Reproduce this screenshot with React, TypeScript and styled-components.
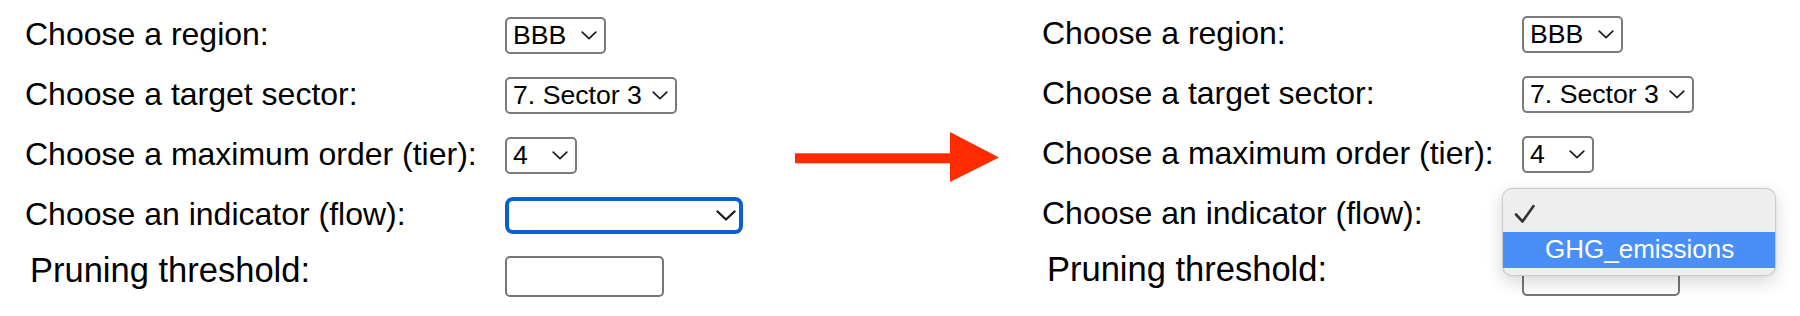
import React from "react";
import styled, { createGlobalStyle } from "styled-components";

const GlobalStyle = createGlobalStyle`
  html, body {
    margin: 0;
    padding: 0;
    background: #ffffff;
  }
  body {
    font-family: "Liberation Sans", Arial, Helvetica, sans-serif;
    color: #000000;
  }
`;

const Page = styled.div`
  display: flex;
  align-items: flex-start;
  width: 1800px;
  height: 316px;
  padding-left: 25px;
  box-sizing: border-box;
  overflow: hidden;
`;

const Panel = styled.div<{ $top: number; $gapLeft: number }>`
  display: grid;
  grid-template-columns: 480px 238px;
  grid-auto-rows: auto;
  row-gap: 23px;
  padding-top: ${(p) => p.$top}px;
  margin-left: ${(p) => p.$gapLeft}px;
`;

const Label = styled.div`
  font-size: 32px;
  line-height: 34px;
  white-space: nowrap;
`;

const PruneLabel = styled.div`
  font-size: 34.5px;
  line-height: 26px;
  padding-left: 5px;
  white-space: nowrap;
`;

const Cell = styled.div`
  position: relative;
  display: flex;
  align-items: flex-start;
`;

const SelectBox = styled.div<{ $w: number; $focused?: boolean }>`
  box-sizing: border-box;
  display: flex;
  align-items: center;
  justify-content: space-between;
  width: ${(p) => p.$w}px;
  height: 37px;
  padding: 0 ${(p) => (p.$focused ? 3 : 7)}px 0 6px;
  border: ${(p) => (p.$focused ? "4px solid #0b5fd0" : "2px solid #7a7a7a")};
  border-radius: ${(p) => (p.$focused ? 8 : 5)}px;
  background: #ffffff;
  font-size: 26.67px;
  white-space: nowrap;
`;

const Chevron = styled.svg`
  flex: none;
  display: block;
`;

const PruneInput = styled.input<{ $w: number }>`
  box-sizing: border-box;
  width: ${(p) => p.$w}px;
  height: 41px;
  margin: -1px 0 0;
  border: 2px solid #767676;
  border-radius: 5px;
  background: #ffffff;
  font-size: 26px;
  padding: 0 6px;
  outline: none;
`;

const ArrowWrap = styled.svg`
  flex: none;
  display: block;
  margin-left: 52px;
  margin-top: 132px;
`;

const Menu = styled.div`
  position: absolute;
  left: -20px;
  top: -8.5px;
  width: 274px;
  box-sizing: border-box;
  padding: 7px 0 7px;
  background: #eeeeee;
  border: 1px solid rgba(0, 0, 0, 0.14);
  border-radius: 10px;
  box-shadow: 0 6px 18px rgba(0, 0, 0, 0.16), 0 0 2px rgba(0, 0, 0, 0.08);
  z-index: 10;
`;

const MenuItem = styled.div<{ $active?: boolean }>`
  display: flex;
  align-items: center;
  height: 36px;
  padding-left: 11px;
  font-size: 26px;
  color: ${(p) => (p.$active ? "#ffffff" : "#1a1a1a")};
  background: ${(p) => (p.$active ? "#4a8ff7" : "transparent")};
  white-space: nowrap;
`;

const Mark = styled.span`
  flex: none;
  display: flex;
  align-items: center;
  width: 31px;
  height: 36px;
`;

function ChevronIcon({ big }: { big?: boolean }) {
  return big ? (
    <Chevron width="20" height="11" viewBox="0 0 20 11">
      <polyline points="1.5,1.5 10,9.5 18.5,1.5" fill="none" stroke="#1c1c1c" strokeWidth="2.4" strokeLinecap="round" strokeLinejoin="round" />
    </Chevron>
  ) : (
    <Chevron width="16" height="9" viewBox="0 0 16 9">
      <polyline points="1.2,1.2 8,7.6 14.8,1.2" fill="none" stroke="#1c1c1c" strokeWidth="1.7" strokeLinecap="round" strokeLinejoin="round" />
    </Chevron>
  );
}

function Select({ value, width, focused }: { value: string; width: number; focused?: boolean }) {
  return (
    <SelectBox $w={width} $focused={focused}>
      <span>{value}</span>
      <ChevronIcon big={focused} />
    </SelectBox>
  );
}

function CheckIcon() {
  return (
    <svg width="21" height="20" viewBox="0 0 21 20" style={{ display: "block" }}>
      <polyline points="2,10.5 8.5,17.5 19.5,2" fill="none" stroke="#333333" strokeWidth="2.6" strokeLinecap="round" strokeLinejoin="round" />
    </svg>
  );
}

function Form({ open, top, gapLeft, pruneWidth }: { open?: boolean; top: number; gapLeft: number; pruneWidth: number }) {
  return (
    <Panel $top={top} $gapLeft={gapLeft}>
      <Label>Choose a region:</Label>
      <Cell>
        <Select value="BBB" width={101} />
      </Cell>
      <Label>Choose a target sector:</Label>
      <Cell>
        <Select value="7. Sector 3" width={172} />
      </Cell>
      <Label>Choose a maximum order (tier):</Label>
      <Cell>
        <Select value="4" width={72} />
      </Cell>
      <Label>Choose an indicator (flow):</Label>
      <Cell>
        <Select value="" width={238} focused={!open} />
        {open && (
          <Menu>
            <MenuItem>
              <Mark>
                <CheckIcon />
              </Mark>
            </MenuItem>
            <MenuItem $active>
              <Mark />
              GHG_emissions
            </MenuItem>
          </Menu>
        )}
      </Cell>
      <PruneLabel>Pruning threshold:</PruneLabel>
      <Cell>
        <PruneInput $w={pruneWidth} type="text" />
      </Cell>
    </Panel>
  );
}

function Arrow() {
  return (
    <ArrowWrap width="204" height="50" viewBox="0 0 204 50">
      <rect x="0" y="21.3" width="158" height="10" fill="#fe2a00" />
      <polygon points="155,0 204,25.5 155,50" fill="#fe2a00" />
    </ArrowWrap>
  );
}

export default function App() {
  return (
    <>
      <GlobalStyle />
      <Page>
        <Form top={17} gapLeft={0} pruneWidth={159} />
        <Arrow />
        <Form open top={16} gapLeft={43} pruneWidth={158} />
      </Page>
    </>
  );
}
